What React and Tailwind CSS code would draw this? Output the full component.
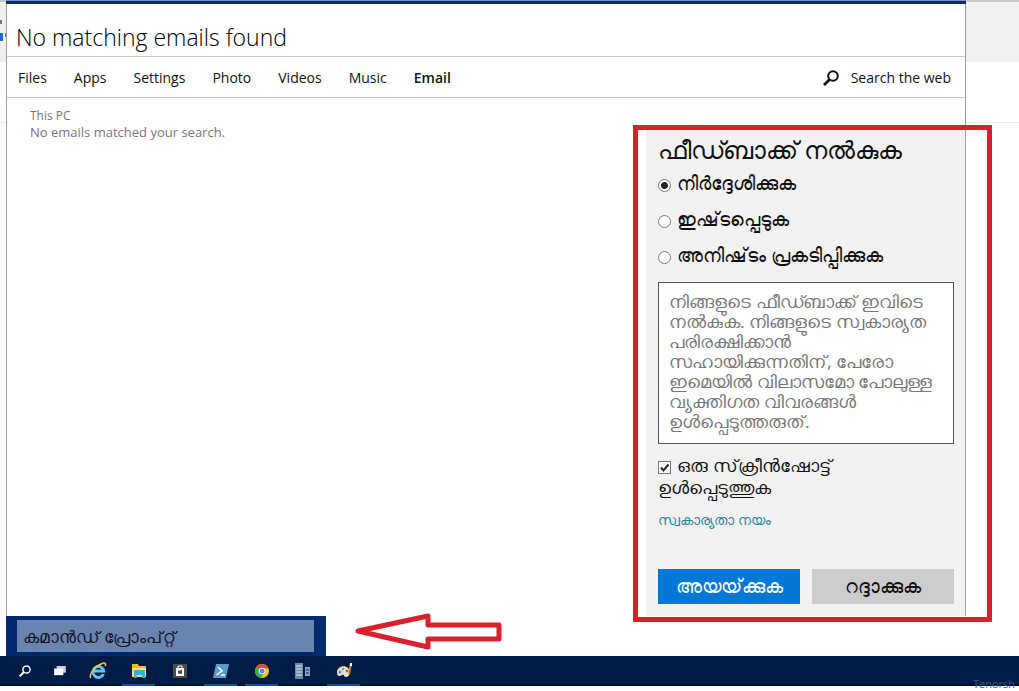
import { useState } from 'react'

const TABS = ['Files', 'Apps', 'Settings', 'Photo', 'Videos', 'Music', 'Email']

// \u200c keeps the conjuncts in their open form
const OPTIONS = [
  { id: 'suggest', label: 'നിർദ്ദേശിക്കുക' },
  { id: 'like', label: 'ഇഷ്\u200cടപ്പെടുക' },
  { id: 'dislike', label: 'അനിഷ്\u200cടം പ്രകടിപ്പിക്കുക' },
]

const HINT = [
  'നിങ്ങളുടെ ഫീഡ്ബാക്ക് ഇവിടെ',
  'നൽകുക. നിങ്ങളുടെ സ്വകാര്യത',
  'പരിരക്ഷിക്കാൻ',
  'സഹായിക്കുന്നതിന്, പേരോ',
  'ഇമെയിൽ വിലാസമോ പോലുള്ള',
  'വ്യക്തിഗത വിവരങ്ങൾ',
  'ഉൾപ്പെടുത്തരുത്.',
].join('\n')

export default function App() {
  return (
    <div className="min-h-screen flex flex-col bg-white text-[#111] font-['Open_Sans','Noto_Sans',sans-serif]">
      <div className="flex-1 flex">
        <LeftEdge />
        <SearchPanel />
        <RightEdge />
      </div>
      <Taskbar />
      <div className="h-[5px]" />
    </div>
  )
}

/* ---------- Window behind the search panel ---------- */

function LeftEdge() {
  return (
    <div className="w-[6px] shrink-0 overflow-hidden">
      <div className="h-[62px] bg-[#f0f0f0] border-t-2 border-[#c9c9c9] pt-[18px]">
        <div className="w-[2px] h-1 bg-[#777] mb-[9px]" />
        <div className="flex">
          <div className="w-[3px] h-2 bg-[#2a66c8]" />
          <div className="ml-[2px] w-px h-1 bg-[#d2691e]" />
        </div>
      </div>
      <div className="h-[61px] border-b border-[#ececec]" />
    </div>
  )
}

function RightEdge() {
  return (
    <div className="w-[53px] shrink-0">
      <div className="h-[62px] bg-[#f0f0f0] border-t-2 border-[#c9c9c9]" />
      <div className="h-[61px] border-b border-[#ececec]" />
    </div>
  )
}

/* ---------- Search panel ---------- */

function SearchPanel() {
  return (
    <main className="flex-1 flex flex-col">
      <div className="h-1 bg-[#0a2a66] border-t border-[#6f93c4]" />
      <div className="flex-1 flex flex-col border-x border-[#a0a0a0]">
        <h1 className="h-[53px] pl-[9px] pt-[17px] border-b border-[#c8c8c8] text-[23px] leading-8 font-light text-black">
          No matching emails found
        </h1>
        <nav className="h-[41px] flex items-center justify-between pl-[11px] pr-[14px] pt-px border-b border-[#c8c8c8] text-sm">
          <div className="flex gap-[27px]">
            {TABS.map((t) => (
              <a key={t} href={`#${t}`} className={t === 'Email' ? 'font-semibold' : ''}>
                {t}
              </a>
            ))}
          </div>
          <a href="#web" className="flex items-center gap-3">
            <SearchIcon className="size-4" />
            Search the web
          </a>
        </nav>
        <div className="flex-1 flex justify-between">
          <div className="pl-[23px] pt-[10px] text-[#777]">
            <p className="text-xs leading-4">This PC</p>
            <p className="text-[13px] leading-4">No emails matched your search.</p>
          </div>
          <Feedback />
        </div>
      </div>
      <div className="flex items-start">
        <div className="w-[320px] h-10 bg-[#012a6e] pl-[11px] pt-1 pr-3 pb-1">
          <input
            aria-label="Search"
            defaultValue="കമാൻഡ് പ്രോംപ്റ്റ്"
            className="block w-full h-8 bg-[#6a84b0] px-[6px] text-[17px] text-[#0a1020] outline-none"
          />
        </div>
        <Arrow />
      </div>
    </main>
  )
}

function Feedback() {
  const [choice, setChoice] = useState('suggest')

  return (
    <form className="relative w-[319px] mt-8 bg-[#f2f2f2] pl-3 pr-[11px] pt-1 pb-3">
      <div className="absolute -left-[13px] -right-[27px] -top-[5px] -bottom-[6px] border-[5px] border-[#d9202c] pointer-events-none" />
      <h2 className="text-[25px] leading-[30px] h-9">ഫീഡ്ബാക്ക് നൽകുക</h2>
      {OPTIONS.map((o) => (
        <label key={o.id} className="h-9 flex items-start gap-[6px] text-[19px] leading-[26px]">
          <input
            type="radio"
            name="kind"
            checked={choice === o.id}
            onChange={() => setChoice(o.id)}
            className="appearance-none shrink-0 mt-[9px] size-[13px] rounded-full border border-[#777] bg-white checked:bg-[radial-gradient(circle,#222_0_3px,#fff_4px)]"
          />
          {o.label}
        </label>
      ))}
      <textarea
        aria-label="Feedback"
        placeholder={HINT}
        className="block mt-1 w-full h-[162px] resize-none overflow-hidden border border-[#555] bg-white px-[10px] py-2 text-lg leading-5 whitespace-pre placeholder:text-[#777]"
      />
      <label className="block mt-[10px] text-lg leading-[22px]">
        <span className="inline-grid mr-[6px] align-[-2px]">
          <input
            type="checkbox"
            defaultChecked
            className="peer col-start-1 row-start-1 appearance-none size-[13px] border border-[#777] bg-white"
          />
          <CheckMark />
        </span>
        {'ഒരു സ്\u200cക്രീൻഷോട്ട്'}
        <br />
        ഉൾപ്പെടുത്തുക
      </label>
      <a href="#privacy" className="block mt-3 text-sm leading-5 text-[#1a87a3]">
        സ്വകാര്യതാ നയം
      </a>
      <div className="mt-[39px] flex gap-3 text-[19px]">
        <button type="button" className="flex-1 h-[35px] bg-[#0078d7] text-white">
          {'അയയ്\u200cക്കുക'}
        </button>
        <button type="button" className="flex-1 h-[35px] bg-[#ccc]">
          റദ്ദാക്കുക
        </button>
      </div>
    </form>
  )
}

function CheckMark() {
  return (
    <svg
      viewBox="0 0 13 13"
      className="col-start-1 row-start-1 size-[13px] pointer-events-none invisible peer-checked:visible"
    >
      <path d="M3 6.5L5.5 9.5L10.5 3.5" fill="none" stroke="#222" strokeWidth="2" />
    </svg>
  )
}

function Arrow() {
  return (
    <svg viewBox="0 0 148 38" className="ml-[28px] w-[148px] h-[38px] -mt-[3px]">
      <path
        d="M4 18L74 3V12H145V26H74V34Z"
        fill="#fff"
        stroke="#d9202c"
        strokeWidth="5"
        strokeLinejoin="round"
      />
    </svg>
  )
}

function SearchIcon({ className }) {
  return (
    <svg viewBox="0 0 16 16" className={className} fill="none" stroke="currentColor">
      <circle cx="10" cy="6" r="4.8" strokeWidth="2" />
      <path d="M6.5 9.5L1 15" strokeWidth="2.8" />
    </svg>
  )
}

/* ---------- Taskbar ---------- */

const APPS = [
  { name: 'Search', icon: <SearchIcon className="size-3 text-white" /> },
  { name: 'Task view', icon: <TaskViewIcon /> },
  { name: 'Internet Explorer', icon: <ExplorerIcon /> },
  { name: 'Files', icon: <FolderIcon />, open: true },
  { name: 'Store', icon: <StoreIcon /> },
  { name: 'PowerShell', icon: <ShellIcon />, open: true },
  { name: 'Chrome', icon: <ChromeIcon />, open: true },
  { name: 'Server', icon: <ServerIcon /> },
  { name: 'Paint', icon: <PaintIcon />, open: true },
]

function Taskbar() {
  return (
    <footer className="h-[30px] flex justify-between bg-[#001c46] border-b-2 border-[#00102c]">
      <div className="flex pl-[7px]">
        {APPS.map((a) => (
          <button
            key={a.name}
            aria-label={a.name}
            className={`h-[30px] flex items-center justify-center ${
              a.name === 'Search' || a.name === 'Task view' ? 'w-[35px]' : 'w-[41px]'
            } ${a.open ? 'bg-[linear-gradient(#1c4a9c,#1c4a9c)] bg-no-repeat bg-bottom bg-[length:33px_2px]' : ''}`}
          >
            {a.icon}
          </button>
        ))}
      </div>
      <span className="self-end h-[6px] pr-1 text-[11px] leading-3 text-[#2f5c90]">Tenorsh</span>
    </footer>
  )
}

function TaskViewIcon() {
  return (
    <svg viewBox="0 0 14 12" className="w-3 h-[10px]">
      <path d="M3 0H14V8H3Z" fill="#c8d0dc" />
      <path d="M0 3H11V11H0Z" fill="#fff" />
    </svg>
  )
}

function ExplorerIcon() {
  return (
    <svg viewBox="0 0 18 18" className="size-[18px]" fill="none">
      <path d="M14.5 12A5.5 5.5 0 1 1 14.8 9H5" stroke="#5cc8f2" strokeWidth="2.8" />
      <path d="M2 16C-1 14 5 5 12 2C16 0 17.5 1.5 16 4" stroke="#f3c63c" strokeWidth="1.5" />
    </svg>
  )
}

function FolderIcon() {
  return (
    <svg viewBox="0 0 16 16" className="size-4">
      <path d="M1 1H7L8 3H15V14H1Z" fill="#e9b93a" />
      <path d="M1 5H15V14H1Z" fill="#fbe07a" />
      <path d="M3 7H14V15H11V12H6V15H3Z" fill="#35b3d6" />
    </svg>
  )
}

function StoreIcon() {
  return (
    <svg viewBox="0 0 16 16" className="size-4">
      <rect x="1" y="1" width="14" height="14" fill="#4d4a48" />
      <path d="M6 5V3H10V5" fill="none" stroke="#fff" />
      <path d="M4 5H12V13H4Z" fill="#fff" />
      <path d="M6 8L10 7V11L6 10.5Z" fill="#4d4a48" />
    </svg>
  )
}

function ShellIcon() {
  return (
    <svg viewBox="0 0 16 16" className="size-4">
      <path d="M3 1H16L13 15H0Z" fill="#5b9bcb" />
      <path d="M5 4L9 8L3.5 12M8 12H12" fill="none" stroke="#fff" strokeWidth="1.5" />
    </svg>
  )
}

function ChromeIcon() {
  return (
    <svg viewBox="0 0 16 16" className="size-4">
      <circle cx="8" cy="8" r="7" fill="#f5c71a" />
      <path d="M8 8L2 4.4A7 7 0 0 1 14.5 5.5H8Z" fill="#dd4b3e" />
      <path d="M8 8L2 4.4A7 7 0 0 0 7 15L10.5 9.5Z" fill="#3ba757" />
      <circle cx="8" cy="8" r="3.3" fill="#fff" />
      <circle cx="8" cy="8" r="2.5" fill="#4a8af4" />
    </svg>
  )
}

function ServerIcon() {
  return (
    <svg viewBox="0 0 18 18" className="size-[18px]">
      <path d="M1 1H9V17H1Z" fill="#6f8aa8" />
      <path d="M2 4H8M2 7H8M2 10H8M2 13H8" stroke="#dbe6f0" />
      <path d="M11 5H16V14H11Z" fill="#8ba4bd" />
      <path d="M12 8H15M12 11H15" stroke="#123" />
    </svg>
  )
}

function PaintIcon() {
  return (
    <svg viewBox="0 0 18 18" className="size-[18px]">
      <path d="M2 10C2 5 9 2 13 6C16 9 15 15 11 15C8 15 10 12 7 13C4 15 2 14 2 10Z" fill="#e9dfd2" />
      <circle cx="5" cy="10" r="1.5" fill="#2c9be0" />
      <circle cx="8" cy="7" r="1.3" fill="#50b848" />
      <circle cx="12" cy="9" r="1.3" fill="#e0402c" />
      <path d="M16 1L14 12" stroke="#c98a3c" strokeWidth="2" />
      <path d="M16 1V4" stroke="#fff" strokeWidth="2" />
    </svg>
  )
}
